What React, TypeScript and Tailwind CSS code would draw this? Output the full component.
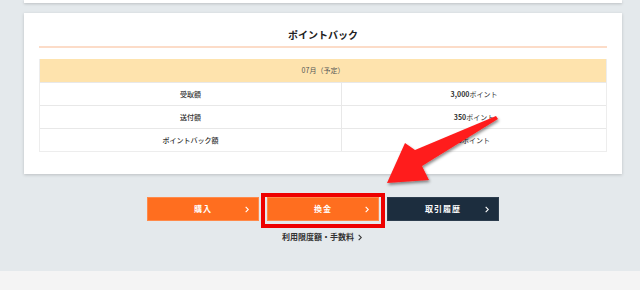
import React from "react";

const font = { fontFamily: '"Noto Sans CJK JP", "Noto Sans", sans-serif' };

function Chevron({ className = "" }: { className?: string }) {
  return (
    <svg viewBox="0 0 6 10" className={`w-[4px] h-[7px] ${className}`} fill="none">
      <path d="M1 1l4 4-4 4" stroke="currentColor" strokeWidth="1.6" />
    </svg>
  );
}

function Row({ label, children }: { label: string; children: React.ReactNode }) {
  return (
    <div className="flex h-[23px] border-t border-[#e8e8e8] text-[7px] text-[#333]">
      <div className="w-[302px] flex items-center justify-center font-medium border-r border-[#e8e8e8]">{label}</div>
      <div className="flex-1 flex items-center justify-center">{children}</div>
    </div>
  );
}

function ActionButton({ label, dark }: { label: string; dark?: boolean }) {
  return (
    <button
      className={`relative w-[112px] h-[24px] flex items-center justify-center text-white text-[8px] font-bold ${
        dark ? "bg-[#1c2d3e] border border-[#2c3d4e]" : "bg-[#ff6e1f] border border-[#ff8a4a]"
      }`}
    >
      <span className="tracking-[1px]">{label}</span>
      <Chevron className="absolute right-[9px] top-[8px]" />
    </button>
  );
}

export default function App() {
  return (
    <div className="relative w-[640px] h-[290px] overflow-hidden bg-[#f4f4f4]" style={font}>
      <div className="h-[271px] bg-[#e4e9ec]">
        <div className="ml-[24px] w-[598px] h-[3px] bg-white shadow-[0_1px_3px_rgba(0,0,0,0.18)]" />

        <div className="ml-[24px] mt-[10px] w-[598px] h-[161px] bg-white px-[15px] shadow-[0_1px_3px_rgba(0,0,0,0.18)]">
          <div className="pt-[16px] pb-[7px] h-[35px] text-center text-[10px] leading-[12px] font-bold text-[#222] border-b-2 border-[#fcdcc8]">
            ポイントバック
          </div>

          <div className="mt-[11px] border-b border-x border-[#ededed]">
            <div className="h-[23px] bg-[#fee3ad] flex items-center justify-center text-[7px] text-[#555]">
              07月（予定）
            </div>
            <Row label="受取額">
              <span className="font-bold">3,000</span>
              <span>ポイント</span>
            </Row>
            <Row label="送付額">
              <span className="font-bold">350</span>
              <span>ポイント</span>
            </Row>
            <Row label="ポイントバック額">
              <span className="font-bold">0</span>
              <span>ポイント</span>
            </Row>
          </div>
        </div>

        <div className="mt-[23px] ml-[147px] flex gap-[8px]">
          <ActionButton label="購入" />
          <ActionButton label="換金" />
          <ActionButton label="取引履歴" dark />
        </div>

        <div className="mt-[10px] flex justify-center pl-[4px]">
          <a className="flex items-center gap-[4px] text-[8px] font-bold text-[#333]">
            利用限度額・手数料
            <Chevron className="text-[#333]" />
          </a>
        </div>
      </div>

      {/* annotation: red frame around 換金 */}
      <div className="absolute left-[261px] top-[193px] w-[124px] h-[35px] border-[4px] border-[#ee0000] pointer-events-none" />

      {/* annotation: arrow */}
      <svg className="absolute left-0 top-0 pointer-events-none" width="640" height="290">
        <defs>
          <filter id="sh" x="-20%" y="-20%" width="140%" height="140%">
            <feDropShadow dx="1" dy="2" stdDeviation="1.6" floodColor="#000" floodOpacity="0.45" />
          </filter>
        </defs>
        <polygon
          filter="url(#sh)"
          fill="#ff1c1c"
          points="496,116 415,150 405,143 387,183 429,180 422,166 498,119"
        />
      </svg>
    </div>
  );
}
